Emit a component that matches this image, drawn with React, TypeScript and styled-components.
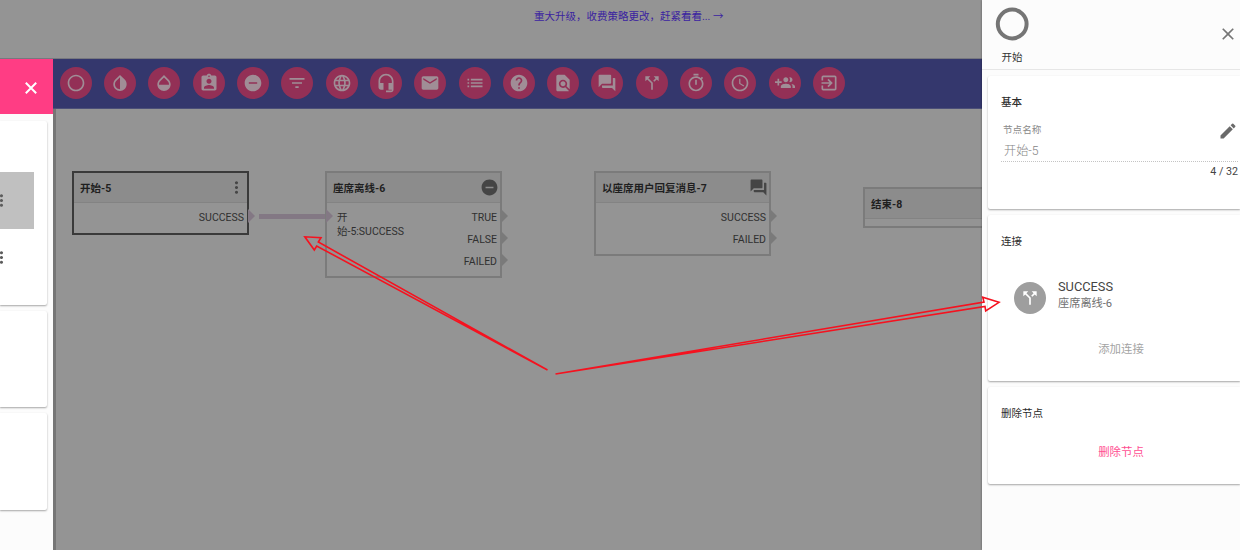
import React from 'react';
import styled, { createGlobalStyle } from 'styled-components';
import {
  MdRadioButtonUnchecked, MdAssignmentInd, MdRemoveCircle, MdFilterList, MdLanguage,
  MdEmail, MdList, MdHelp, MdFindInPage, MdForum, MdCallSplit,
  MdAccessTime, MdExitToApp, MdMoreVert, MdClose, MdEdit,
} from 'react-icons/md';

const Global = createGlobalStyle`
  * { box-sizing: border-box; }
  body { margin: 0; overflow: hidden; }
  svg { display: block; flex: none; }
`;

const Page = styled.div`
  position: relative;
  display: flex;
  width: 1240px;
  height: 550px;
  overflow: hidden;
  font-family: Roboto, "Noto Sans CJK SC", sans-serif;
  font-size: 10.5px;
  color: #333;
`;

const Main = styled.div`
  flex: none;
  display: flex;
  flex-direction: column;
  width: 982px;
  height: 550px;
  background: #949494;
  overflow: hidden;
`;

const Banner = styled.div`
  flex: none;
  height: 59px;
  padding: 9px 0 0 534px;
  line-height: 15px;
  font-size: 10.5px;
  border-bottom: 1px solid #77787f;
  color: #3b23a0;
  white-space: nowrap;
`;

const Body = styled.div`
  flex: 1;
  display: flex;
  min-height: 0;
`;

const SidePanel = styled.aside`
  flex: none;
  width: 53px;
  background: #fcfcfc;
  overflow: hidden;
`;

const SideHeader = styled.div`
  height: 55px;
  display: flex;
  align-items: center;
  justify-content: flex-end;
  padding: 2px 12px 0 0;
  background: #ff3d84;
  color: #fff;
`;

const SideCard = styled.div<{ $h: number; $top: number }>`
  height: ${p => p.$h}px;
  width: 47px;
  margin-top: ${p => p.$top}px;
  background: #fff;
  border-radius: 0 2px 2px 0;
  box-shadow: 0 1px 2px rgba(0, 0, 0, 0.35);
`;

const SideItem = styled.div<{ $active?: boolean }>`
  display: flex;
  align-items: center;
  width: 34px;
  height: 57px;
  padding-bottom: 1px;
  background: ${p => (p.$active ? '#c0c0c0' : 'transparent')};
  color: #5c5c5c;
  overflow: hidden;
  svg { margin-left: -8px; }
`;

const SideList = styled.div`
  padding-top: 51px;
`;

const Workspace = styled.div`
  flex: 1;
  min-width: 0;
  display: flex;
  flex-direction: column;
`;

const Toolbar = styled.div`
  flex: none;
  display: flex;
  gap: 12.3px;
  height: 50px;
  padding: 7.5px 0 0 6.9px;
  background: #34376d;
  border-bottom: 1px solid #4c4f78;
`;

const ToolButton = styled.div`
  flex: none;
  display: flex;
  align-items: center;
  justify-content: center;
  width: 32px;
  height: 32px;
  border-radius: 50%;
  background: #933056;
  color: #a08d96;
`;

const Canvas = styled.div`
  position: relative;
  flex: 1;
  border-left: 3px solid #767676;
  overflow: hidden;
`;

const NodeBox = styled.div<{ $x: number; $y: number; $h: number; $selected?: boolean }>`
  position: absolute;
  left: ${p => p.$x}px;
  top: ${p => p.$y}px;
  width: 177px;
  height: ${p => p.$h}px;
  border: ${p => (p.$selected ? '2px solid #3a3a3a' : '2px solid #7b7b7b')};
  background: #949494;
`;

const NodeHead = styled.div`
  display: flex;
  align-items: center;
  justify-content: space-between;
  height: 30px;
  padding: 0 1px 0 6px;
  background: #8c8c8c;
  border-bottom: 1px solid #838383;
  color: #454545;
`;

const NodeTitle = styled.span`
  font-weight: 700;
  font-size: 10.5px;
  color: #1f1f1f;
  white-space: nowrap;
`;

const NodeBody = styled.div`
  display: flex;
  justify-content: space-between;
  padding-top: 4px;
`;

const Inputs = styled.div`
  width: 70px;
  margin-left: 10px;
  padding-top: 4px;
  line-height: 14px;
  color: #303030;
`;

const Outputs = styled.div`
  padding-right: 3px;
`;

const Output = styled.div`
  position: relative;
  height: 22px;
  line-height: 22px;
  text-align: right;
  color: #303030;
`;

const Port = styled.i<{ $linked?: boolean; $input?: boolean }>`
  position: absolute;
  ${p => (p.$input ? 'left: -1px; top: 36px;' : 'right: -11px; top: 2px;')}
  border-style: solid;
  border-width: 7px 0 7px 7px;
  border-color: transparent transparent transparent ${p => (p.$linked ? '#837884' : '#7a7a7a')};
`;

const Link = styled.div`
  position: absolute;
  left: 203px;
  top: 105px;
  width: 68px;
  height: 5px;
  background: #837884;
`;

const Drawer = styled.aside`
  flex: none;
  width: 258px;
  height: 550px;
  padding-left: 6px;
  background: #fcfcfc;
  box-shadow: 0 0 2px rgba(0, 0, 0, 0.4);
  z-index: 1;
`;

const DrawerHeader = styled.header`
  display: flex;
  justify-content: space-between;
  height: 70px;
  margin-left: -6px;
  padding: 4px 2px 0 10px;
  border-bottom: 1px solid #e6e6e6;
  color: #757575;
`;

const NodeKind = styled.div`
  display: flex;
  flex-direction: column;
  align-items: center;
  gap: 6px;
  line-height: 15px;
  span { color: #333; }
`;

const CloseButton = styled.div`
  padding-top: 20px;
`;

const Card = styled.section<{ $h: number; $top: number }>`
  height: ${p => p.$h}px;
  margin-top: ${p => p.$top}px;
  padding: 18px 2px 0 13px;
  background: #fff;
  border-radius: 2px 0 0 2px;
  box-shadow: 0 1px 2px rgba(0, 0, 0, 0.35);
`;

const CardTitle = styled.div<{ $bold?: boolean }>`
  height: 18px;
  line-height: 18px;
  font-weight: ${p => (p.$bold ? 500 : 400)};
  color: #2b2b2b;
`;

const Field = styled.div`
  display: flex;
  justify-content: space-between;
  margin-top: 10px;
  height: 40px;
  border-bottom: 1px dotted #c4c4c4;
  color: #6a6a6a;
  svg { margin-top: -1px; }
`;

const FieldText = styled.div`
  padding-left: 2px;
`;

const Label = styled.div`
  font-size: 9.6px;
  line-height: 16px;
  color: #8a8a8a;
`;

const Value = styled.div`
  padding-left: 1px;
  font-size: 12.2px;
  line-height: 26px;
  font-weight: 300;
  color: #858585;
`;

const Counter = styled.div`
  margin-top: 2px;
  line-height: 15px;
  text-align: right;
  font-size: 10.7px;
  color: #444;
`;

const Connection = styled.div`
  display: flex;
  gap: 12px;
  margin: 31px 0 0 13px;
  height: 32px;
`;

const Avatar = styled.div`
  display: flex;
  align-items: center;
  justify-content: center;
  width: 32px;
  height: 32px;
  border-radius: 50%;
  background: #9e9e9e;
  color: #fff;
`;

const ConnectionText = styled.div`
  margin-top: -3px;
  font-size: 11.2px;
  line-height: 17px;
  color: #707070;
`;

const ConnectionName = styled.div`
  font-size: 12.8px;
  line-height: 16px;
  color: #444;
`;

const TextButton = styled.div<{ $top: number; $danger?: boolean }>`
  margin-top: ${p => p.$top}px;
  padding-left: 3px;
  text-align: center;
  font-size: 11.4px;
  line-height: 18px;
  color: ${p => (p.$danger ? '#ff4f92' : '#a3a3a3')};
`;

const Annotation = styled.svg`
  position: absolute;
  left: 0;
  top: 0;
  z-index: 2;
  pointer-events: none;
`;

const glyph = (d: string) => ({ size }: { size: number }) => (
  <svg width={size} height={size} viewBox="0 0 24 24" fill="currentColor">
    <path d={d} />
  </svg>
);

const InvertDrop = glyph('M17.66 7.93L12 2.27 6.34 7.93c-3.12 3.12-3.12 8.19 0 11.31C7.9 20.8 9.95 21.58 12 21.58s4.1-.78 5.66-2.34c3.12-3.12 3.12-8.19 0-11.31zM12 19.59c-1.6 0-3.11-.62-4.24-1.76C6.62 16.69 6 15.19 6 13.59s.62-3.11 1.76-4.24L12 5.1v14.49z');
const OpacityDrop = glyph('M17.66 8L12 2.35 6.34 8C4.78 9.56 4 11.64 4 13.64s.78 4.11 2.34 5.67 3.61 2.35 5.66 2.35 4.1-.79 5.66-2.35S20 15.64 20 13.64 19.22 9.56 17.66 8zM6 14c.01-2 .62-3.27 1.76-4.4L12 5.27l4.24 4.38C17.38 10.77 17.99 12 18 14H6z');
const Headset = glyph('M12 1c-4.97 0-9 4.03-9 9v7c0 1.66 1.34 3 3 3h3v-8H5v-2c0-3.87 3.13-7 7-7s7 3.13 7 7v2h-4v8h4v1h-7v2h6c1.66 0 3-1.34 3-3V10c0-4.97-4.03-9-9-9z');
const Stopwatch = glyph('M15 1H9v2h6V1zm-4 13h2V8h-2v6zm8.03-6.61l1.42-1.42c-.43-.51-.9-.99-1.41-1.41l-1.42 1.42C16.07 4.74 14.12 4 12 4c-4.97 0-9 4.03-9 9s4.02 9 9 9 9-4.03 9-9c0-2.12-.74-4.07-1.97-5.61zM12 20c-3.87 0-7-3.13-7-7s3.13-7 7-7 7 3.13 7 7-3.13 7-7 7z');
const AddGroup = glyph('M8 10H5V7H3v3H0v2h3v3h2v-3h3v-2zm10 1c1.66 0 2.99-1.34 2.99-3S19.66 5 18 5c-.32 0-.63.05-.91.14.57.81.9 1.79.9 2.86s-.34 2.04-.9 2.86c.28.09.59.14.91.14zm-5 0c1.66 0 2.99-1.34 2.99-3S14.66 5 13 5c-1.66 0-3 1.34-3 3s1.34 3 3 3zm6.62 2.16c.83.73 1.38 1.66 1.38 2.84v2h3v-2c0-1.54-2.37-2.49-4.38-2.84zM13 13c-2 0-6 1-6 3v2h12v-2c0-2-4-3-6-3z');

const tools: React.ComponentType<{ size: number }>[] = [
  MdRadioButtonUnchecked, InvertDrop, OpacityDrop, MdAssignmentInd, MdRemoveCircle,
  MdFilterList, MdLanguage, Headset, MdEmail, MdList, MdHelp, MdFindInPage, MdForum,
  MdCallSplit, Stopwatch, MdAccessTime, AddGroup, MdExitToApp,
];

interface NodeProps {
  x: number;
  y: number;
  h: number;
  title: string;
  icon?: React.ReactNode;
  input?: string;
  outputs?: string[];
  selected?: boolean;
}

const FlowNode = ({ x, y, h, title, icon, input, outputs = [], selected }: NodeProps) => (
  <NodeBox $x={x} $y={y} $h={h} $selected={selected}>
    <NodeHead>
      <NodeTitle>{title}</NodeTitle>
      {icon}
    </NodeHead>
    <NodeBody>
      <Inputs>{input}</Inputs>
      <Outputs>
        {outputs.map(o => (
          <Output key={o}>
            {o}
            <Port $linked={selected} />
          </Output>
        ))}
      </Outputs>
    </NodeBody>
    {input && <Port $input $linked />}
  </NodeBox>
);

export default function App() {
  return (
    <Page>
      <Global />
      <Main>
        <Banner>重大升级，收费策略更改，赶紧看看... →</Banner>
        <Body>
          <SidePanel>
            <SideHeader>
              <svg width="20" height="20" viewBox="0 0 20 20" fill="none" stroke="currentColor" strokeWidth="2">
                <path d="M4.8 4.8L15.2 15.2M15.2 4.8L4.8 15.2" />
              </svg>
            </SideHeader>
            <SideCard $h={184} $top={7}>
              <SideList>
                <SideItem $active><MdMoreVert size={19} /></SideItem>
                <SideItem><MdMoreVert size={19} /></SideItem>
              </SideList>
            </SideCard>
            <SideCard $h={96} $top={6} />
            <SideCard $h={97} $top={6} />
          </SidePanel>
          <Workspace>
            <Toolbar>
              {tools.map((Icon, i) => (
                <ToolButton key={i}><Icon size={20} /></ToolButton>
              ))}
            </Toolbar>
            <Canvas>
              <Link />
              <FlowNode x={16} y={62} h={64} title="开始-5" selected icon={<MdMoreVert size={19} />} outputs={['SUCCESS']} />
              <FlowNode x={269} y={62} h={107} title="座席离线-6" icon={<MdRemoveCircle size={19} />} input="开始-5:SUCCESS" outputs={['TRUE', 'FALSE', 'FAILED']} />
              <FlowNode x={538} y={62} h={85} title="以座席用户回复消息-7" icon={<MdForum size={19} />} outputs={['SUCCESS', 'FAILED']} />
              <FlowNode x={807} y={78} h={41} title="结束-8" />
            </Canvas>
          </Workspace>
        </Body>
      </Main>
      <Drawer>
        <DrawerHeader>
          <NodeKind>
            <svg width="40" height="40" viewBox="0 0 40 40" fill="none" stroke="currentColor" strokeWidth="4">
              <circle cx="20.2" cy="20" r="14.4" />
            </svg>
            <span>开始</span>
          </NodeKind>
          <CloseButton><MdClose size={20} /></CloseButton>
        </DrawerHeader>
        <Card $h={133} $top={6}>
          <CardTitle $bold>基本</CardTitle>
          <Field>
            <FieldText>
              <Label>节点名称</Label>
              <Value>开始-5</Value>
            </FieldText>
            <MdEdit size={20} />
          </Field>
          <Counter>4 / 32</Counter>
        </Card>
        <Card $h={166} $top={6}>
          <CardTitle>连接</CardTitle>
          <Connection>
            <Avatar><MdCallSplit size={20} /></Avatar>
            <ConnectionText>
              <ConnectionName>SUCCESS</ConnectionName>
              座席离线-6
            </ConnectionText>
          </Connection>
          <TextButton $top={26}>添加连接</TextButton>
        </Card>
        <Card $h={97} $top={6}>
          <CardTitle>删除节点</CardTitle>
          <TextButton $top={20} $danger>删除节点</TextButton>
        </Card>
      </Drawer>
      <Annotation width="1240" height="550" viewBox="0 0 1240 550" fill="none" stroke="#f5121f" strokeWidth="1.6">
        <path d="M547.5 370 L316.7 246 L314.3 250 L304.8 236.8 L321 237.7 L318.3 242 Z" />
        <path d="M555.5 374 L984 302 L982.7 297.3 L999 302.3 L985.7 311 L985 306.5 Z" />
      </Annotation>
    </Page>
  );
}
